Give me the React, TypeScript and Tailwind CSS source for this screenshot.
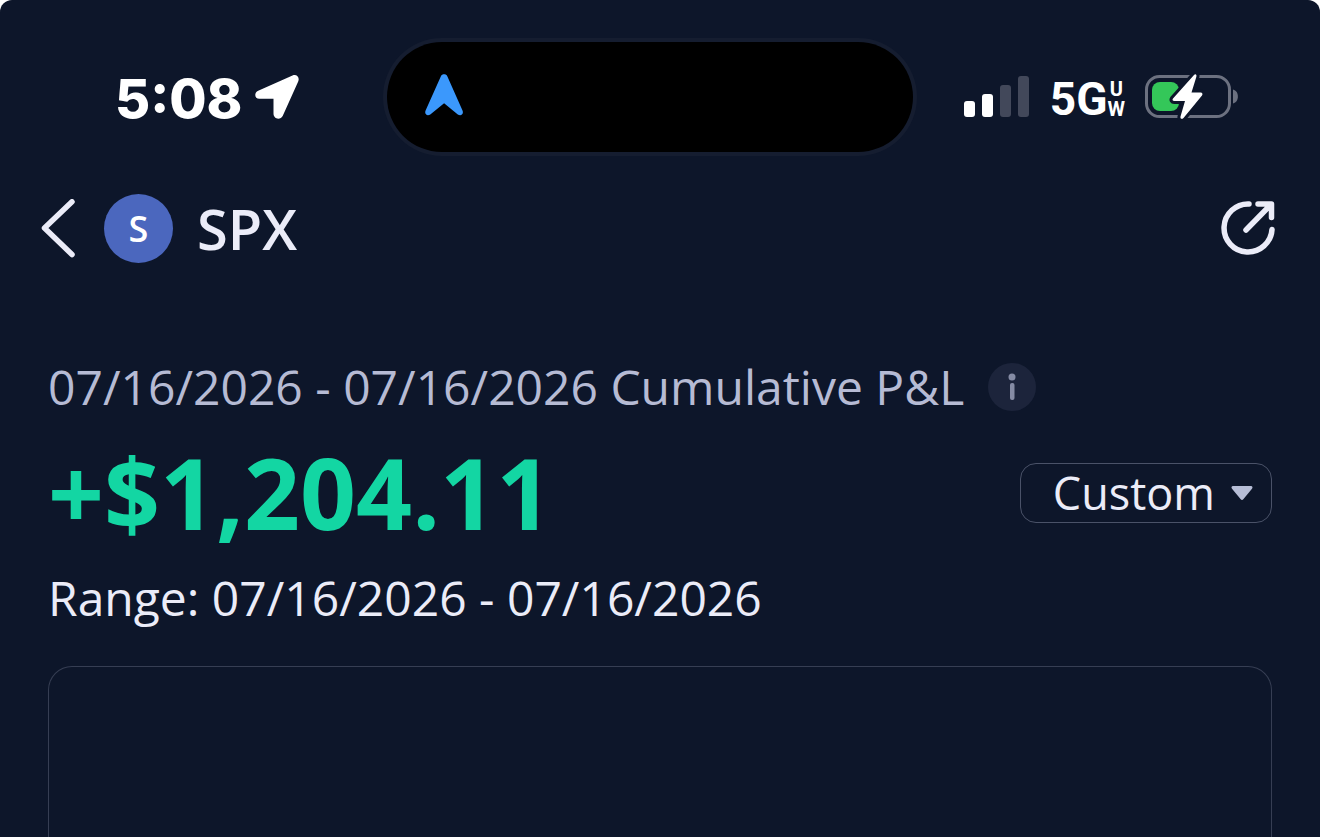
import type { ReactNode } from "react";

function LocationArrow() {
  return (
    <svg width="46" height="46" viewBox="0 0 46 46" fill="#fff" aria-hidden="true">
      <path d="M38.5 1.4 4.2 16.8C-.2 18.8.5 24.8 5.4 24.8H19.5V39.5C19.5 45.4 26.6 46.4 28.8 41.7L44.2 7.5C46 3.3 42.5-.4 38.5 1.4Z" />
    </svg>
  );
}

function NavigationMark() {
  return (
    <svg width="38" height="42" viewBox="0 0 38 42" fill="#3b98fc" aria-hidden="true">
      <path d="M15.9 2.2C17-.3 21.2-.3 22.3 2.2L37.5 36.5C39 40 36 42.4 32.8 40.4L19.1 29.3 5.3 40.4C2.1 42.4-.9 40 .6 36.5Z" />
    </svg>
  );
}

function SignalBars() {
  return (
    <svg width="66" height="42" viewBox="0 0 66 42" aria-hidden="true">
      <rect x="0" y="25" width="11" height="16" rx="3" fill="#fff" />
      <rect x="18" y="18" width="11" height="23" rx="3" fill="#fff" />
      <rect x="36" y="9" width="11" height="32" rx="3" fill="#42485a" />
      <rect x="54" y="0" width="11" height="41" rx="3" fill="#42485a" />
    </svg>
  );
}

function Battery() {
  return (
    <svg width="94" height="48" viewBox="0 0 94 48" aria-hidden="true">
      <rect x="1.5" y="3.5" width="83" height="40" rx="13" fill="none" stroke="#6c7180" strokeWidth="3" />
      <path d="M88 16.5C94.5 18 94.5 29 88 30.5Z" fill="#6c7180" />
      <rect x="7" y="9" width="27" height="29" rx="8" fill="#34c759" />
      <path
        d="M49 2 28 25.5C27 27 27.6 28 29.3 28H40L35.5 43.5C35 46 37 46.5 38.5 45L57 22.5C58 21 57.4 19.5 55.6 19.5H46.5L51.3 4C52 1.5 50.5.5 49 2Z"
        fill="#fff"
        stroke="#0d162a"
        strokeWidth="6"
        strokeLinejoin="round"
        paintOrder="stroke"
      />
    </svg>
  );
}

function StatusBar() {
  return (
    <header className="grid grid-cols-[1fr_526px_1fr] items-center pr-5 pt-[42px] text-white">
      <div className="flex items-center gap-3 pl-[115px]">
        <time className="pt-1 font-['Inter'] text-[54px] font-extrabold leading-none">5:08</time>
        <LocationArrow />
      </div>
      <div className="flex h-[110px] items-center rounded-full bg-black pb-1 pl-[38px] ring-4 ring-[#151d30]">
        <NavigationMark />
      </div>
      <div className="flex items-center justify-end pr-[61px]">
        <SignalBars />
        <div className="mx-5 flex items-center pt-1 font-['Roboto'] font-bold">
          <span className="text-[46px] leading-none">5G</span>
          <span className="flex flex-col items-center text-[20px] leading-[20px]">
            <span>U</span>
            <span>W</span>
          </span>
        </div>
        <Battery />
      </div>
    </header>
  );
}

function IconButton({ label, children }: { label: string; children: ReactNode }) {
  return (
    <button type="button" aria-label={label} className="cursor-pointer">
      {children}
    </button>
  );
}

function TitleBar() {
  return (
    <div className="flex items-center justify-between pl-10 pr-11 pt-[42px]">
      <div className="flex items-center">
        <IconButton label="Back">
          <svg width="36" height="60" viewBox="0 0 36 60" fill="none" stroke="#ebecf8" strokeWidth="5.5" strokeLinecap="round" strokeLinejoin="round">
            <path d="M32 2.8 4.5 29 32 55.5" />
          </svg>
        </IconButton>
        <span className="ml-7 flex size-[69px] items-center justify-center rounded-full bg-[#4b67be] text-[36px] font-semibold text-white">
          S
        </span>
        <h1 className="ml-6 text-[56px] font-semibold leading-[69px] text-[#ebecf8]">SPX</h1>
      </div>
      <IconButton label="Share">
        <svg width="56" height="56" viewBox="0 1.5 56 56" fill="none" stroke="#ebecf8" strokeWidth="5.5" strokeLinecap="round" strokeLinejoin="round">
          <path d="M29 4.5A24 24 0 1 0 52 30" />
          <path d="M26 30.5 50 6M38 4.5H51.5V18" />
        </svg>
      </IconButton>
    </div>
  );
}

export default function App() {
  return (
    <main className="flex min-h-screen flex-col rounded-t-xl bg-[#0d162a] font-['Open_Sans',sans-serif]">
      <StatusBar />
      <TitleBar />

      <section className="flex grow flex-col px-12 pt-[92px]">
        <div className="flex items-center gap-6">
          <h2 className="text-[48px] leading-[64px] text-[#b6bbd4]">
            07/16/2026 - 07/16/2026 Cumulative P&amp;L
          </h2>
          <button
            type="button"
            aria-label="About cumulative P&L"
            className="flex size-12 cursor-pointer items-center justify-center rounded-full bg-[#1c243b]"
          >
            <svg width="8" height="28" viewBox="0 0 8 28" fill="#858ba4" aria-hidden="true">
              <circle cx="4" cy="4" r="3.5" />
              <rect x="2" y="10" width="4.5" height="17" rx="2" />
            </svg>
          </button>
        </div>

        <div className="flex items-center justify-between">
          <p className="text-[98px] font-bold leading-[147px] text-[#13d6a3]">+$1,204.11</p>
          <button
            type="button"
            aria-haspopup="listbox"
            className="flex h-[60px] cursor-pointer items-center gap-4 rounded-2xl border border-[#4a5268] pl-8 pr-[18px] text-[45px] text-[#ebecf8]"
          >
            Custom
            <svg width="22" height="16" viewBox="0 0 22 16" fill="#b6bdd6" aria-hidden="true">
              <path d="M2 1H20C21.5 1 22 2.5 21 3.7L12.5 14C11.5 15.2 10.5 15.2 9.5 14L1 3.7C0 2.5.5 1 2 1Z" />
            </svg>
          </button>
        </div>

        <p className="text-[48px] leading-[64px] text-[#ebecf8]">Range: 07/16/2026 - 07/16/2026</p>

        <div className="mt-9 grow rounded-t-3xl border border-b-0 border-[#363e53]" />
      </section>
    </main>
  );
}
